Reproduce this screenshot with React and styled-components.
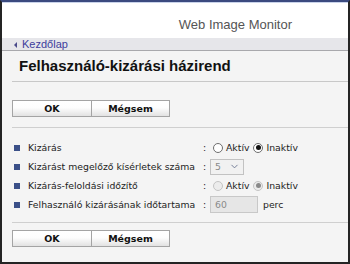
import React from 'react'
import styled, { createGlobalStyle } from 'styled-components'
import { ChevronDown } from 'lucide-react'

const GlobalStyle = createGlobalStyle`
  html, body {
    margin: 0;
    padding: 0;
    background: #fff;
  }
`

const Window = styled.div`
  box-sizing: border-box;
  width: 350px;
  height: 264px;
  display: flex;
  flex-direction: column;
  border-left: 2px solid #242424;
  border-right: 2px solid #242424;
  border-bottom: 2px solid #242424;
  border-top: 2px solid #3b4a7f;
  background: #f4f4f4;
  overflow: hidden;
`

const Header = styled.div`
  height: 36px;
  background: #fff;
  border-top: 1px solid #c9d3ea;
  display: flex;
  justify-content: flex-end;
  align-items: flex-start;
  padding-right: 56px;
  box-sizing: border-box;
  font-family: "Liberation Sans", Arial, sans-serif;
  font-size: 13px;
  color: #555;
  padding-top: 14px;
  line-height: 16px;
`

const Nav = styled.div`
  height: 12px;
  background: #e6e6ea;
  border-bottom: 1px solid #a8a8ac;
  display: flex;
  align-items: center;
  padding-left: 12px;
  font-family: "Liberation Sans", Arial, sans-serif;
  font-size: 11px;
  color: #3d3d9c;
`

const Arrow = styled.span`
  width: 0;
  height: 0;
  border-top: 3px solid transparent;
  border-bottom: 3px solid transparent;
  border-right: 3px solid #4a4a8a;
  margin-right: 5px;
  margin-top: 1px;
`

const Content = styled.div`
  flex: 1;
  padding-left: 10px;
`

const Title = styled.h1`
  margin: 0;
  padding: 6px 0 6px 7px;
  height: 18px;
  font-family: "Liberation Sans", Arial, sans-serif;
  font-size: 15px;
  line-height: 18px;
  font-weight: bold;
  color: #111;
  border-bottom: 1px solid #c8c8c8;
`

const ButtonBar = styled.div`
  display: flex;
  margin-top: ${p => p.$top}px;
  padding-bottom: ${p => p.$bottom}px;
  border-bottom: ${p => (p.$line ? '1px solid #cfcfcf' : 'none')};
`

const Button = styled.button`
  width: ${p => p.$w}px;
  height: 17px;
  margin: 0 -1px 0 0;
  padding: 0;
  border: 1px solid #a4a4a4;
  background: linear-gradient(#ffffff, #fdfdfd 45%, #e2e2e2);
  font-family: "DejaVu Sans", Verdana, sans-serif;
  font-size: 9.5px;
  font-weight: bold;
  color: #111;
`

const Rows = styled.div`
  padding: 10px 0 8px;
  border-bottom: 1px solid #cfcfcf;
`

const Row = styled.div`
  display: flex;
  align-items: center;
  height: 19px;
  font-family: "DejaVu Sans", Verdana, sans-serif;
  font-size: 9.3px;
  color: #222;
`

const Bullet = styled.span`
  width: 6px;
  height: 6px;
  background: #3b5088;
  margin: 0 8px 0 2px;
`

const Label = styled.span`
  width: 175px;
  white-space: nowrap;
`

const Colon = styled.span`
  width: 7px;
`

const Radio = styled.span`
  box-sizing: border-box;
  width: 10px;
  height: 10px;
  border-radius: 50%;
  border: 1px solid ${p => (p.$disabled ? '#c4c4c4' : '#6e6e6e')};
  background: ${p => (p.$disabled ? '#ececec' : '#fff')};
  margin: 0 3px 0 ${p => p.$gap}px;
  display: flex;
  align-items: center;
  justify-content: center;
  &::after {
    content: '';
    display: ${p => (p.$checked ? 'block' : 'none')};
    width: 5px;
    height: 5px;
    border-radius: 50%;
    background: ${p => (p.$disabled ? '#8a8a8a' : '#111')};
  }
`

const Select = styled.span`
  box-sizing: border-box;
  width: 34px;
  height: 16px;
  border: 1px solid #c2c2c2;
  background: #f1f1f1;
  display: flex;
  align-items: center;
  justify-content: space-between;
  padding: 0 3px 0 4px;
  color: #8a8a8a;
`

const TextBox = styled.span`
  box-sizing: border-box;
  width: 48px;
  height: 17px;
  border: 1px solid #c8c8c8;
  background: #e6e6e6;
  color: #8a8a8a;
  display: flex;
  align-items: center;
  padding-left: 4px;
`

const Unit = styled.span`
  margin-left: 5px;
`

function RadioPair({ checked, disabled }) {
  return (
    <>
      <Radio $gap={3} $checked={checked === 'a'} $disabled={disabled} />
      <span>Aktív</span>
      <Radio $gap={4} $checked={checked === 'i'} $disabled={disabled} />
      <span>Inaktív</span>
    </>
  )
}

function Buttons(props) {
  return (
    <ButtonBar {...props}>
      <Button $w={80}>OK</Button>
      <Button $w={79}>Mégsem</Button>
    </ButtonBar>
  )
}

export default function App() {
  return (
    <Window>
      <GlobalStyle />
      <Header>Web Image Monitor</Header>
      <Nav>
        <Arrow />
        Kezdőlap
      </Nav>
      <Content>
        <Title>Felhasználó-kizárási házirend</Title>
        <Buttons $top={18} $bottom={10} $line />
        <Rows>
          <Row>
            <Bullet />
            <Label>Kizárás</Label>
            <Colon>:</Colon>
            <RadioPair checked="i" />
          </Row>
          <Row>
            <Bullet />
            <Label>Kizárást megelőző kísérletek száma</Label>
            <Colon>:</Colon>
            <Select>
              5
              <ChevronDown size={11} color="#6a7590" strokeWidth={2} />
            </Select>
          </Row>
          <Row>
            <Bullet />
            <Label>Kizárás-feloldási időzítő</Label>
            <Colon>:</Colon>
            <RadioPair checked="i" disabled />
          </Row>
          <Row>
            <Bullet />
            <Label>Felhasználó kizárásának időtartama</Label>
            <Colon>:</Colon>
            <TextBox>60</TextBox>
            <Unit>perc</Unit>
          </Row>
        </Rows>
        <Buttons $top={7} $bottom={0} />
      </Content>
    </Window>
  )
}
